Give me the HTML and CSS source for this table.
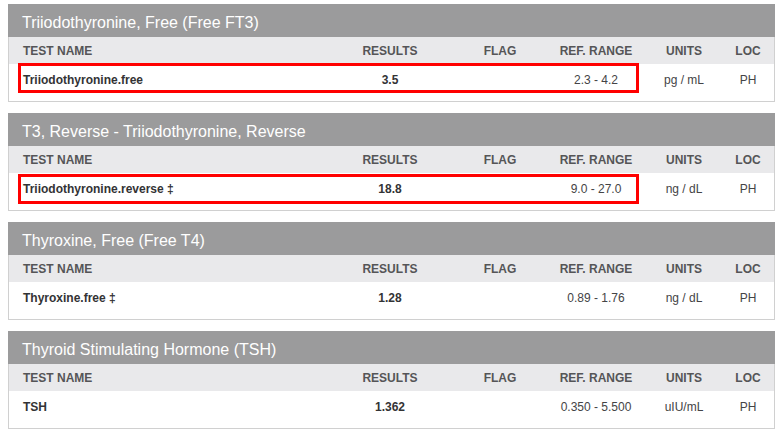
FILE: index.html
```html
<!DOCTYPE html>
<html lang="en">
<head>
    <meta charset="UTF-8">
    <meta name="viewport" content="width=device-width, initial-scale=1.0">
    <title>Thyroid Panel Results</title>
    <link rel="stylesheet" href="styles.css">
</head>
<body>
    <div class="container">
        <section class="panel">
            <h2 class="panel-title">Triiodothyronine, Free (Free FT3)</h2>
            <div class="row head">
                <div class="name">TEST NAME</div>
                <div>RESULTS</div>
                <div>FLAG</div>
                <div>REF. RANGE</div>
                <div>UNITS</div>
                <div>LOC</div>
            </div>
            <div class="row data">
                <div class="name">Triiodothyronine.free</div>
                <div class="result">3.5</div>
                <div></div>
                <div>2.3 - 4.2</div>
                <div>pg / mL</div>
                <div>PH</div>
                <span class="marker"></span>
            </div>
        </section>

        <section class="panel">
            <h2 class="panel-title">T3, Reverse - Triiodothyronine, Reverse</h2>
            <div class="row head">
                <div class="name">TEST NAME</div>
                <div>RESULTS</div>
                <div>FLAG</div>
                <div>REF. RANGE</div>
                <div>UNITS</div>
                <div>LOC</div>
            </div>
            <div class="row data">
                <div class="name">Triiodothyronine.reverse &Dagger;</div>
                <div class="result">18.8</div>
                <div></div>
                <div>9.0 - 27.0</div>
                <div>ng / dL</div>
                <div>PH</div>
                <span class="marker low"></span>
            </div>
        </section>

        <section class="panel">
            <h2 class="panel-title">Thyroxine, Free (Free T4)</h2>
            <div class="row head">
                <div class="name">TEST NAME</div>
                <div>RESULTS</div>
                <div>FLAG</div>
                <div>REF. RANGE</div>
                <div>UNITS</div>
                <div>LOC</div>
            </div>
            <div class="row data">
                <div class="name">Thyroxine.free &Dagger;</div>
                <div class="result">1.28</div>
                <div></div>
                <div>0.89 - 1.76</div>
                <div>ng / dL</div>
                <div>PH</div>
            </div>
        </section>

        <section class="panel">
            <h2 class="panel-title">Thyroid Stimulating Hormone (TSH)</h2>
            <div class="row head">
                <div class="name">TEST NAME</div>
                <div>RESULTS</div>
                <div>FLAG</div>
                <div>REF. RANGE</div>
                <div>UNITS</div>
                <div>LOC</div>
            </div>
            <div class="row data">
                <div class="name">TSH</div>
                <div class="result">1.362</div>
                <div></div>
                <div>0.350 - 5.500</div>
                <div>uIU/mL</div>
                <div>PH</div>
            </div>
        </section>
    </div>
</body>
</html>
```

FILE: styles.css
```css
* {
    margin: 0;
    padding: 0;
    box-sizing: border-box;
}

body {
    background-color: #ffffff;
    font-family: 'Liberation Sans', Arial, sans-serif;
    color: #333333;
}

.container {
    width: 782px;
    padding: 4px 7px 0 8px;
    display: flex;
    flex-direction: column;
    gap: 11px;
}

.panel {
    border: 1px solid #d0d0d0;
    border-top: none;
}

.panel-title {
    background-color: #9b9b9c;
    color: #ffffff;
    font-size: 16px;
    font-weight: normal;
    line-height: 20px;
    height: 33px;
    padding: 9px 14px 0;
    margin: 0 -1px;
}

.row {
    display: grid;
    grid-template-columns: 326px 110px 110px 82px 94px 34px 1fr;
    font-size: 12px;
    line-height: 14px;
    text-align: center;
    position: relative;
}

.row .name {
    text-align: left;
    padding-left: 14px;
}

.head {
    background-color: #e9e9eb;
    color: #555557;
    font-weight: bold;
    height: 27px;
    padding-top: 7px;
}

.data {
    height: 37px;
    padding-top: 9px;
    color: #444446;
}

.data .name,
.data .result {
    font-weight: bold;
    color: #333335;
}

/* red highlight drawn over the flagged rows */
.marker {
    position: absolute;
    left: 9px;
    top: -1px;
    width: 621px;
    height: 30px;
    border: 3px solid #ff0000;
}

.marker.low {
    top: 1px;
}
```
